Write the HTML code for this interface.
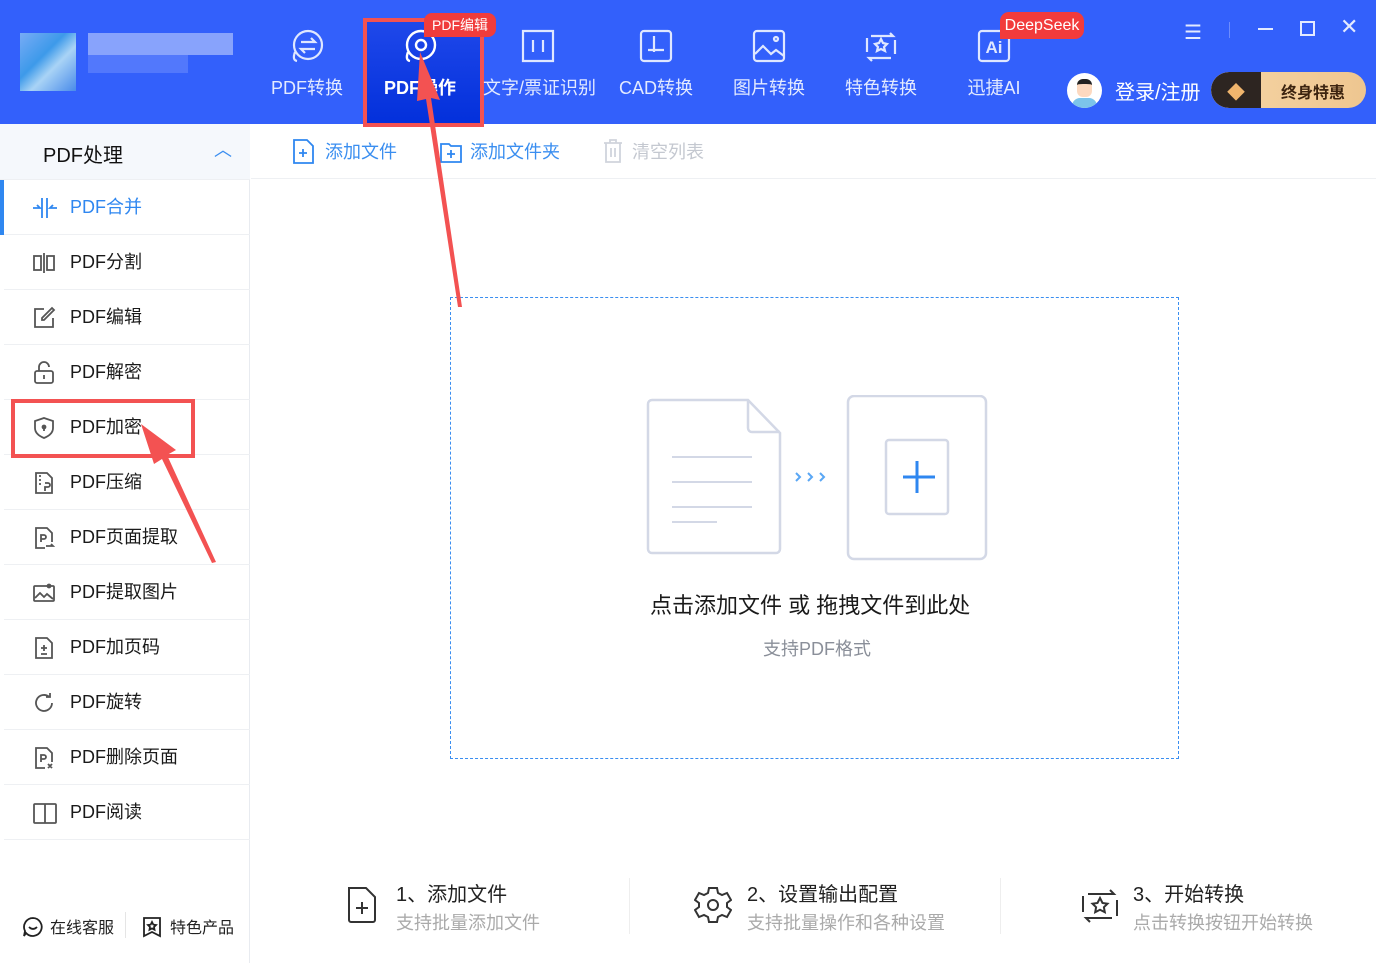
<!DOCTYPE html>
<html><head><meta charset="utf-8"><style>
*{margin:0;padding:0;box-sizing:border-box}
body{width:1376px;height:963px;overflow:hidden;background:#fff;font-family:"Liberation Sans","Noto Sans CJK SC",sans-serif;position:relative}
.hdr{position:absolute;left:0;top:0;width:1376px;height:124px;background:#3360fb}
.tab{position:absolute;top:0;width:110px;height:124px;color:#e3eaff;font-size:18px;text-align:center}
.tab svg{position:absolute;top:28px;left:50%;margin-left:-18px}
.tab span{position:absolute;top:74px;left:0;right:0;white-space:nowrap}
.side{position:absolute;left:0;top:124px;width:250px;height:839px;border-right:1px solid #e8ebf0}
.row{position:absolute;left:4px;width:246px;height:55px;border-bottom:1px solid #eef0f3;font-size:18px;color:#1a1a1a}
.row span{position:absolute;left:66px;top:13px}
.row svg{position:absolute;left:28px;top:16px}
.tb{position:absolute;font-size:18px;top:138px}
.step{position:absolute;top:878px}
.step .t{font-size:20px;color:#222}
.step .s{font-size:18px;color:#aaa;margin-top:2px}
</style></head><body>
<div class="hdr">
 <div style="position:absolute;left:20px;top:33px;width:56px;height:58px;background:linear-gradient(135deg,#7fb4f5,#3ea0e8 40%,#b6e0f5 60%,#4b8fe8);opacity:.9"></div>
 <div style="position:absolute;left:88px;top:33px;width:145px;height:22px;background:#9db4fd;opacity:.8"></div>
 <div style="position:absolute;left:88px;top:55px;width:100px;height:18px;background:#5a7efc;opacity:.8"></div>
 <div class="tab" style="left:252px"><svg width="36" height="36" viewBox="0 0 36 36" fill="none" stroke="#dfe7ff" stroke-width="2.2"><circle cx="19" cy="17" r="14"/><path d="M6 24 Q3 32 8 33"/><path d="M12 14h14l-4-4M26 21H12l4 4"/></svg><span>PDF转换</span></div>
 <div style="position:absolute;left:363px;top:18px;width:121px;height:109px;background:linear-gradient(#1f48ea,#0330db);border:4px solid #f35252"></div>
 <div class="tab" style="left:365px;color:#fff;font-weight:bold"><svg width="36" height="36" viewBox="0 0 36 36" fill="none" stroke="#fff" stroke-width="2.4"><circle cx="19" cy="17" r="14"/><path d="M6 24 Q3 32 8 33"/><circle cx="19" cy="17" r="5"/></svg><span>PDF操作</span></div>
 <div style="position:absolute;left:424px;top:13px;width:72px;height:24px;background:#f03c3c;border-radius:8px 8px 8px 0;color:#fff;font-size:14px;line-height:24px;text-align:center">PDF编辑</div>
 <div class="tab" style="left:483px"><svg width="36" height="36" viewBox="0 0 36 36" fill="none" stroke="#dfe7ff" stroke-width="2.2"><path d="M3 3h30v30H3z"/><path d="M13 12v12M23 12v12"/></svg><span>文字/票证识别</span></div>
 <div class="tab" style="left:601px"><svg width="36" height="36" viewBox="0 0 36 36" fill="none" stroke="#dfe7ff" stroke-width="2.2"><rect x="3" y="3" width="30" height="30" rx="3"/><path d="M16 8v16M10 22h16"/></svg><span>CAD转换</span></div>
 <div class="tab" style="left:714px"><svg width="36" height="36" viewBox="0 0 36 36" fill="none" stroke="#dfe7ff" stroke-width="2.2"><rect x="3" y="3" width="30" height="30" rx="3"/><path d="M4 26l8-8 8 8 5-4 8 6"/><circle cx="25" cy="11" r="2"/></svg><span>图片转换</span></div>
 <div class="tab" style="left:826px"><svg width="36" height="36" viewBox="0 0 36 36" fill="none" stroke="#dfe7ff" stroke-width="2.2"><path d="M8 8h22l-3-3M28 30H6l3 3M4 10v14M32 12v14"/><path d="M18 11l2 4 4 1-3 3 1 4-4-2-4 2 1-4-3-3 4-1z"/></svg><span>特色转换</span></div>
 <div class="tab" style="left:939px"><svg width="36" height="36" viewBox="0 0 36 36" fill="none" stroke="#dfe7ff" stroke-width="2.2"><rect x="3" y="3" width="30" height="30" rx="3"/><text x="18" y="25" fill="#dfe7ff" stroke="none" font-size="17" font-family="Liberation Sans" text-anchor="middle" font-weight="bold">Ai</text></svg><span>迅捷AI</span></div>
 <div style="position:absolute;left:1000px;top:12px;width:84px;height:27px;background:#f23b3b;border-radius:9px 9px 9px 0;color:#fff;font-size:16px;line-height:27px;text-align:center">DeepSeek</div>
 <div style="position:absolute;left:1184px;top:20px;color:#e3eaff;font-size:20px">☰</div>
 <div style="position:absolute;left:1229px;top:22px;width:1px;height:16px;background:#6d8cfc"></div>
 <div style="position:absolute;left:1258px;top:28px;width:15px;height:2px;background:#e3eaff"></div>
 <div style="position:absolute;left:1300px;top:21px;width:15px;height:15px;border:2px solid #e3eaff"></div>
 <div style="position:absolute;left:1340px;top:14px;color:#e3eaff;font-size:22px">✕</div>
 <div style="position:absolute;left:1067px;top:73px;width:35px;height:35px;border-radius:50%;background:#fff;overflow:hidden"><div style="position:absolute;left:10px;top:6px;width:15px;height:18px;background:#fcd9c0;border-radius:6px;border-top:5px solid #222"></div><div style="position:absolute;left:5px;top:25px;width:25px;height:12px;background:#7cc4ea;border-radius:8px 8px 0 0"></div></div>
 <div style="position:absolute;left:1115px;top:76px;color:#fff;font-size:20px">登录/注册</div>
 <div style="position:absolute;left:1211px;top:72px;width:155px;height:36px;border-radius:18px;background:linear-gradient(90deg,#f6d5a5,#eec690);overflow:hidden"><div style="position:absolute;left:0;top:0;width:50px;height:36px;background:#2d2521;border-radius:18px 0 0 18px"></div><div style="position:absolute;left:16px;top:7px;color:#f0b56d;font-size:18px">◆</div><div style="position:absolute;left:70px;top:7px;color:#3c2410;font-size:16px;font-weight:bold">终身特惠</div></div>
</div>

<div class="side">
 <div style="position:absolute;left:0;top:0;width:250px;height:56px;background:#f5f8fc;border-bottom:1px solid #eef0f3"><span style="position:absolute;left:43px;top:15px;font-size:20px;color:#111">PDF处理</span><span style="position:absolute;left:214px;top:12px;color:#3b8ef0;font-size:18px">︿</span></div>
 <div class="row" style="top:56px"><div style="position:absolute;left:-4px;top:0;width:4px;height:55px;background:#2f87f0"></div><svg width="26" height="24" viewBox="0 0 26 24" fill="none" stroke="#2f87f0" stroke-width="1.8" style="left:28px"><path d="M10 2v20M15 2v20M1 12h7l-3-3M25 12h-7l3-3"/></svg><span style="color:#2f87f0">PDF合并</span></div>
 <div class="row" style="top:111px"><svg width="24" height="24" viewBox="0 0 24 24" fill="none" stroke="#555" stroke-width="1.8"><rect x="2" y="5" width="7" height="14"/><rect x="15" y="5" width="7" height="14"/><path d="M12 2v20"/></svg><span>PDF分割</span></div>
 <div class="row" style="top:166px"><svg width="24" height="24" viewBox="0 0 24 24" fill="none" stroke="#555" stroke-width="1.8"><path d="M12 3H3v18h18v-9"/><path d="M20 2l2 2-10 10H10v-2z"/></svg><span>PDF编辑</span></div>
 <div class="row" style="top:221px"><svg width="24" height="24" viewBox="0 0 24 24" fill="none" stroke="#555" stroke-width="1.8"><rect x="3" y="10" width="18" height="12" rx="2"/><path d="M7 10V6a5 5 0 0 1 10 0M12 14v4"/></svg><span>PDF解密</span></div>
 <div class="row" style="top:276px"><svg width="24" height="24" viewBox="0 0 24 24" fill="none" stroke="#555" stroke-width="1.8"><path d="M12 2l9 3v7c0 5-4 8-9 10-5-2-9-5-9-10V5z"/><circle cx="12" cy="11" r="1.5" fill="#555"/><path d="M12 12v3"/></svg><span>PDF加密</span></div>
 <div class="row" style="top:331px"><svg width="24" height="24" viewBox="0 0 24 24" fill="none" stroke="#555" stroke-width="1.8"><path d="M4 2h11l5 5v15H4z"/><path d="M13 12h3a2 2 0 0 1 0 4h-3v4M7 5h2M7 9h2M7 13h2"/></svg><span>PDF压缩</span></div>
 <div class="row" style="top:386px"><svg width="24" height="24" viewBox="0 0 24 24" fill="none" stroke="#555" stroke-width="1.8"><path d="M13 22H4V2h11l5 5v9"/><path d="M9 16V9h3a2 2 0 0 1 0 4H9M14 20h7l-2-2"/></svg><span>PDF页面提取</span></div>
 <div class="row" style="top:441px"><svg width="24" height="24" viewBox="0 0 24 24" fill="none" stroke="#555" stroke-width="1.8"><rect x="2" y="5" width="20" height="15" rx="1"/><path d="M3 17l5-5 4 4 3-3 6 5"/><circle cx="17" cy="5" r="1.5" fill="#555"/></svg><span>PDF提取图片</span></div>
 <div class="row" style="top:496px"><svg width="24" height="24" viewBox="0 0 24 24" fill="none" stroke="#555" stroke-width="1.8"><path d="M4 2h11l5 5v15H4z"/><path d="M12 9v6M9 12h6M9 18h6"/></svg><span>PDF加页码</span></div>
 <div class="row" style="top:551px"><svg width="24" height="24" viewBox="0 0 24 24" fill="none" stroke="#555" stroke-width="1.8"><path d="M20 12a8 8 0 1 1-3-6.3M18 2v4h-4"/></svg><span>PDF旋转</span></div>
 <div class="row" style="top:606px"><svg width="24" height="24" viewBox="0 0 24 24" fill="none" stroke="#555" stroke-width="1.8"><path d="M13 22H4V2h11l5 5v9"/><path d="M9 16V9h3a2 2 0 0 1 0 4H9M16 18l4 4M20 18l-4 4"/></svg><span>PDF删除页面</span></div>
 <div class="row" style="top:661px"><svg width="26" height="24" viewBox="0 0 26 24" fill="none" stroke="#555" stroke-width="1.8"><rect x="2" y="3" width="22" height="19" rx="1"/><path d="M13 3v19"/></svg><span>PDF阅读</span></div>
 <svg style="position:absolute;left:22px;top:792px" width="22" height="22" viewBox="0 0 22 22" fill="none" stroke="#222" stroke-width="1.8"><path d="M11 2a9 9 0 1 1-7 15l-2 3 1-5A9 9 0 0 1 11 2z"/><path d="M7 11q4 4 8 0"/></svg>
 <span style="position:absolute;left:50px;top:790px;font-size:16px;color:#222">在线客服</span>
 <div style="position:absolute;left:125px;top:788px;width:1px;height:26px;background:#e5e5e5"></div>
 <svg style="position:absolute;left:142px;top:792px" width="20" height="22" viewBox="0 0 20 22" fill="none" stroke="#222" stroke-width="1.8"><path d="M2 2h16v18l-8-4-8 4z"/><path d="M10 6l1.3 2.6 2.7.4-2 2 .5 2.7-2.5-1.3-2.5 1.3.5-2.7-2-2 2.7-.4z"/></svg>
 <span style="position:absolute;left:170px;top:790px;font-size:16px;color:#222">特色产品</span>
</div>

<div style="position:absolute;left:251px;top:178px;width:1125px;height:1px;background:#eef0f3"></div>
<svg style="position:absolute;left:293px;top:139px" width="22" height="25" viewBox="0 0 22 25" fill="none" stroke="#2f87f0" stroke-width="1.8"><path d="M1 1h13l6 6v17H1z"/><path d="M10 10v8M6 14h8"/></svg>
<div class="tb" style="left:325px;color:#3a8ef0">添加文件</div>
<svg style="position:absolute;left:440px;top:141px" width="22" height="22" viewBox="0 0 22 22" fill="none" stroke="#2f87f0" stroke-width="1.8"><path d="M1 3h8l2 2h10v16H1z"/><path d="M11 9v8M7 13h8"/></svg>
<div class="tb" style="left:470px;color:#3a8ef0">添加文件夹</div>
<svg style="position:absolute;left:603px;top:139px" width="20" height="24" viewBox="0 0 20 24" fill="none" stroke="#d0d4dc" stroke-width="1.8"><path d="M1 4h18M7 4V1h6v3M3 4v19h14V4M8 9v9M12 9v9"/></svg>
<div class="tb" style="left:632px;color:#c4c8d0">清空列表</div>

<div style="position:absolute;left:450px;top:297px;width:729px;height:462px;border:1px dashed #3a8ef0"></div>
<svg style="position:absolute;left:645px;top:395px" width="345" height="167" viewBox="0 0 345 167" fill="none" stroke="#d3d8e6" stroke-width="2.5">
 <path d="M9 5h94l32 33v116a4 4 0 0 1-4 4H7a4 4 0 0 1-4-4V9a4 4 0 0 1 4-4z"/><path d="M103 5v28a4 4 0 0 0 4 4h28"/>
 <path d="M27 62h80M27 87h80M27 112h80M27 127h45" stroke-width="2"/>
 <rect x="203" y="1" width="138" height="163" rx="6"/>
 <rect x="241" y="45" width="62" height="74" rx="3"/>
 <path d="M258 82h32M272 66v32" stroke="#2f87f0" stroke-width="3"/>
 <path d="M151 78l4 4-4 4M163 78l4 4-4 4M175 78l4 4-4 4" stroke="#5aa7f5" stroke-width="2"/>
</svg>
<div style="position:absolute;left:650px;top:588px;font-size:22px;color:#1a1a1a">点击添加文件 或 拖拽文件到此处</div>
<div style="position:absolute;left:763px;top:635px;font-size:18px;color:#8a8f99">支持PDF格式</div>

<svg style="position:absolute;left:346px;top:884px" width="32" height="40" viewBox="0 0 32 40" fill="none" stroke="#333" stroke-width="2"><path d="M3 4h17l9 9v23a2 2 0 0 1-2 2H5a2 2 0 0 1-2-2z"/><path d="M16 18v12M10 24h12"/></svg>
<div class="step" style="left:396px"><div class="t">1、添加文件</div><div class="s">支持批量添加文件</div></div>
<div style="position:absolute;left:629px;top:878px;width:1px;height:56px;background:#eee"></div>
<svg style="position:absolute;left:694px;top:885px" width="38" height="40" viewBox="0 0 38 40" fill="none" stroke="#333" stroke-width="2"><path d="M15 3h8l1 5 4 2 5-2 4 7-4 3v4l4 3-4 7-5-2-4 2-1 5h-8l-1-5-4-2-5 2-4-7 4-3v-4l-4-3 4-7 5 2 4-2z"/><circle cx="19" cy="20" r="5"/></svg>
<div class="step" style="left:747px"><div class="t">2、设置输出配置</div><div class="s">支持批量操作和各种设置</div></div>
<div style="position:absolute;left:1000px;top:878px;width:1px;height:56px;background:#eee"></div>
<svg style="position:absolute;left:1080px;top:886px" width="40" height="40" viewBox="0 0 40 40" fill="none" stroke="#333" stroke-width="2"><path d="M8 8h26l-4-4M32 32H6l4 4M3 10v16M37 14v16"/><path d="M20 12l2.5 5 5 .7-3.6 3.5.9 5-4.8-2.5-4.8 2.5.9-5-3.6-3.5 5-.7z"/></svg>
<div class="step" style="left:1133px"><div class="t">3、开始转换</div><div class="s">点击转换按钮开始转换</div></div>

<div style="position:absolute;left:11px;top:399px;width:184px;height:59px;border:4px solid #f35252"></div>
<svg style="position:absolute;left:0;top:0" width="1376" height="963" viewBox="0 0 1376 963">
 <polygon points="420,52 440,100 431,98 462,307 458,307 426,99 417,101" fill="#f35252"/>
 <polygon points="141,424 176,450 167,455 216,562 212,563 162,459 154,464" fill="#f35252"/>
</svg>
</body></html>
